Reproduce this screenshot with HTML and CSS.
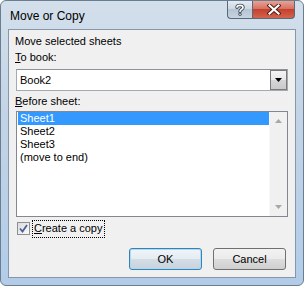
FILE: index.html
```html
<!DOCTYPE html>
<html lang="en">
<head>
    <meta charset="UTF-8">
    <meta name="viewport" content="width=device-width, initial-scale=1.0">
    <title>Move or Copy</title>
    <link rel="stylesheet" href="styles.css">
</head>
<body>
    <div class="window">
        <div class="titlebar">
            <span class="title">Move or Copy</span>
            <div class="caption-btns">
                <button class="cap-btn cap-help" title="Help">
                    <svg width="12" height="13" viewBox="0 0 12 13">
                        <path d="M3 4.2 C3 1.8 9 1.6 9 4.4 C9 6.4 6 6.4 6 8.4" fill="none" stroke="#3b4654" stroke-width="3.4" stroke-linecap="round"/>
                        <path d="M3 4.2 C3 1.8 9 1.6 9 4.4 C9 6.4 6 6.4 6 8.4" fill="none" stroke="#fff" stroke-width="1.6" stroke-linecap="round"/>
                        <circle cx="6" cy="11.2" r="1.6" fill="#3b4654"/>
                        <circle cx="6" cy="11.2" r="0.8" fill="#fff"/>
                    </svg>
                </button>
                <button class="cap-btn cap-close" title="Close">
                    <svg width="14" height="11" viewBox="0 0 14 11">
                        <path d="M2.5 1.5 L11.5 9.5 M11.5 1.5 L2.5 9.5" stroke="#4a1a14" stroke-width="4" stroke-linecap="square"/>
                        <path d="M2.5 1.5 L11.5 9.5 M11.5 1.5 L2.5 9.5" stroke="#fff" stroke-width="2.2" stroke-linecap="square"/>
                    </svg>
                </button>
            </div>
        </div>

        <div class="client">
            <div class="label">Move selected sheets</div>
            <div class="label"><u>T</u>o book:</div>
            <div class="combo">
                <span class="combo-text">Book2</span>
                <span class="drop-btn">
                    <svg width="7" height="4" viewBox="0 0 7 4"><path d="M0 0 H7 L3.5 4 Z" fill="#000"/></svg>
                </span>
            </div>
            <div class="label label-gap"><u>B</u>efore sheet:</div>
            <div class="listbox">
                <ul class="items">
                    <li class="selected">Sheet1</li>
                    <li>Sheet2</li>
                    <li>Sheet3</li>
                    <li>(move to end)</li>
                </ul>
                <div class="scrollbar">
                    <svg width="7" height="4" viewBox="0 0 7 4"><path d="M0 4 H7 L3.5 0 Z" fill="#a8a8a8"/></svg>
                    <svg width="7" height="4" viewBox="0 0 7 4"><path d="M0 0 H7 L3.5 4 Z" fill="#a8a8a8"/></svg>
                </div>
            </div>
            <label class="check">
                <span class="box">
                    <svg width="9" height="9" viewBox="0 0 9 9"><path d="M1 4.5 L3.5 7.5 L8 1" fill="none" stroke="#4a5f97" stroke-width="1.8"/></svg>
                </span>
                <span class="focus"><u>C</u>reate a copy</span>
            </label>
            <div class="buttons">
                <button class="btn btn-default">OK</button>
                <button class="btn">Cancel</button>
            </div>
        </div>
    </div>
</body>
</html>
```

FILE: styles.css
```css
body {
    margin: 0;
    font-family: "Liberation Sans", Arial, sans-serif;
    font-size: 11px;
    color: #000;
    background-color: #ffffff;
}
.window {
    width: 304px;
    height: 286px;
    box-sizing: border-box;
    border: 1px solid #6b7d90;
    border-radius: 6px;
    background: linear-gradient(to bottom, #d3dfeb 0%, #c3d4e6 40%, #b2cce8 100%);
    overflow: hidden;
}
.titlebar {
    height: 28px;
    display: flex;
    align-items: flex-start;
    padding-left: 9px;
}
.title {
    font-size: 12px;
    line-height: 14px;
    margin-top: 8px;
}
.caption-btns {
    margin-left: auto;
    margin-right: 8px;
    margin-top: -1px;
    display: flex;
}
.cap-btn {
    height: 19px;
    padding: 0;
    border: 1px solid #5a6878;
    border-top: none;
    display: flex;
    align-items: center;
    justify-content: center;
}
.cap-help {
    width: 25px;
    border-right: none;
    border-radius: 0 0 0 4px;
    background: linear-gradient(to bottom, #e6edf4 0%, #ccd7e2 50%, #b6c4d3 51%, #c6d3e0 100%);
}
.cap-close {
    width: 43px;
    border-radius: 0 0 4px 0;
    background: linear-gradient(to bottom, #e9a99c 0%, #d7705f 50%, #c2402e 51%, #d5634c 100%);
}
.client {
    margin: 0 7px;
    height: 249px;
    box-sizing: border-box;
    border: 1px solid #8797aa;
    background-color: #f0f0f0;
    padding: 5px 7px 0 7px;
    display: flex;
    flex-direction: column;
}
.label {
    line-height: 13px;
    height: 13px;
    margin-left: -1px;
    margin-bottom: 3px;
}
.label-gap {
    margin-top: 4px;
    margin-bottom: 3px;
}
.combo {
    margin-top: 2px;
    height: 22px;
    box-sizing: border-box;
    border: 1px solid #a5a9b0;
    border-top-color: #8e9298;
    background-color: #fff;
    display: flex;
    align-items: center;
}
.combo-text {
    padding-left: 3px;
    flex: 1;
}
.drop-btn {
    width: 17px;
    height: 20px;
    box-sizing: border-box;
    border: 1px solid #7a7a7a;
    background: linear-gradient(to bottom, #f4f4f4 0%, #e6e6e6 50%, #d6d6d6 51%, #c9c9c9 100%);
    display: flex;
    align-items: center;
    justify-content: center;
}
.listbox {
    height: 106px;
    box-sizing: border-box;
    border: 1px solid #828790;
    background-color: #fff;
    display: flex;
}
.items {
    list-style: none;
    margin: 0;
    padding: 0 0 0 1px;
    flex: 1;
}
.items li {
    line-height: 13px;
    height: 13px;
    padding-left: 2px;
}
.items li.selected {
    background-color: #3399ff;
    color: #fff;
}
.scrollbar {
    width: 17px;
    background-color: #f0f0f0;
    border-left: 1px solid #f7f7f7;
    display: flex;
    flex-direction: column;
    justify-content: space-between;
    align-items: center;
    padding: 7px 0 7px;
}
.check {
    margin-top: 3px;
    height: 17px;
    display: flex;
    align-items: center;
}
.box {
    width: 13px;
    height: 13px;
    box-sizing: border-box;
    margin-left: 1px;
    border: 1px solid #8e8f8f;
    background: linear-gradient(135deg, #dcdcdc, #fbfbfb);
    display: flex;
    align-items: center;
    justify-content: center;
}
.focus {
    margin-left: 2px;
    padding: 1px 1px 2px 1px;
    line-height: 13px;
    border: 1px dotted #000;
}
.buttons {
    margin-top: 11px;
    display: flex;
    justify-content: flex-end;
    gap: 11px;
    padding-right: 2px;
}
.btn {
    width: 73px;
    height: 22px;
    font-family: "Liberation Sans", Arial, sans-serif;
    font-size: 11px;
    color: #000;
    border: 1px solid #707070;
    border-radius: 3px;
    background: linear-gradient(to bottom, #f2f2f2 0%, #ebebeb 50%, #dddddd 51%, #cfcfcf 100%);
    padding: 0;
}
.btn-default {
    border-color: #3c7fb1;
    box-shadow: inset 0 0 0 1px #a6dcf5;
    background: linear-gradient(to bottom, #f0f5f9 0%, #e4ecf2 50%, #d4dde5 51%, #c9d3dc 100%);
}
```
